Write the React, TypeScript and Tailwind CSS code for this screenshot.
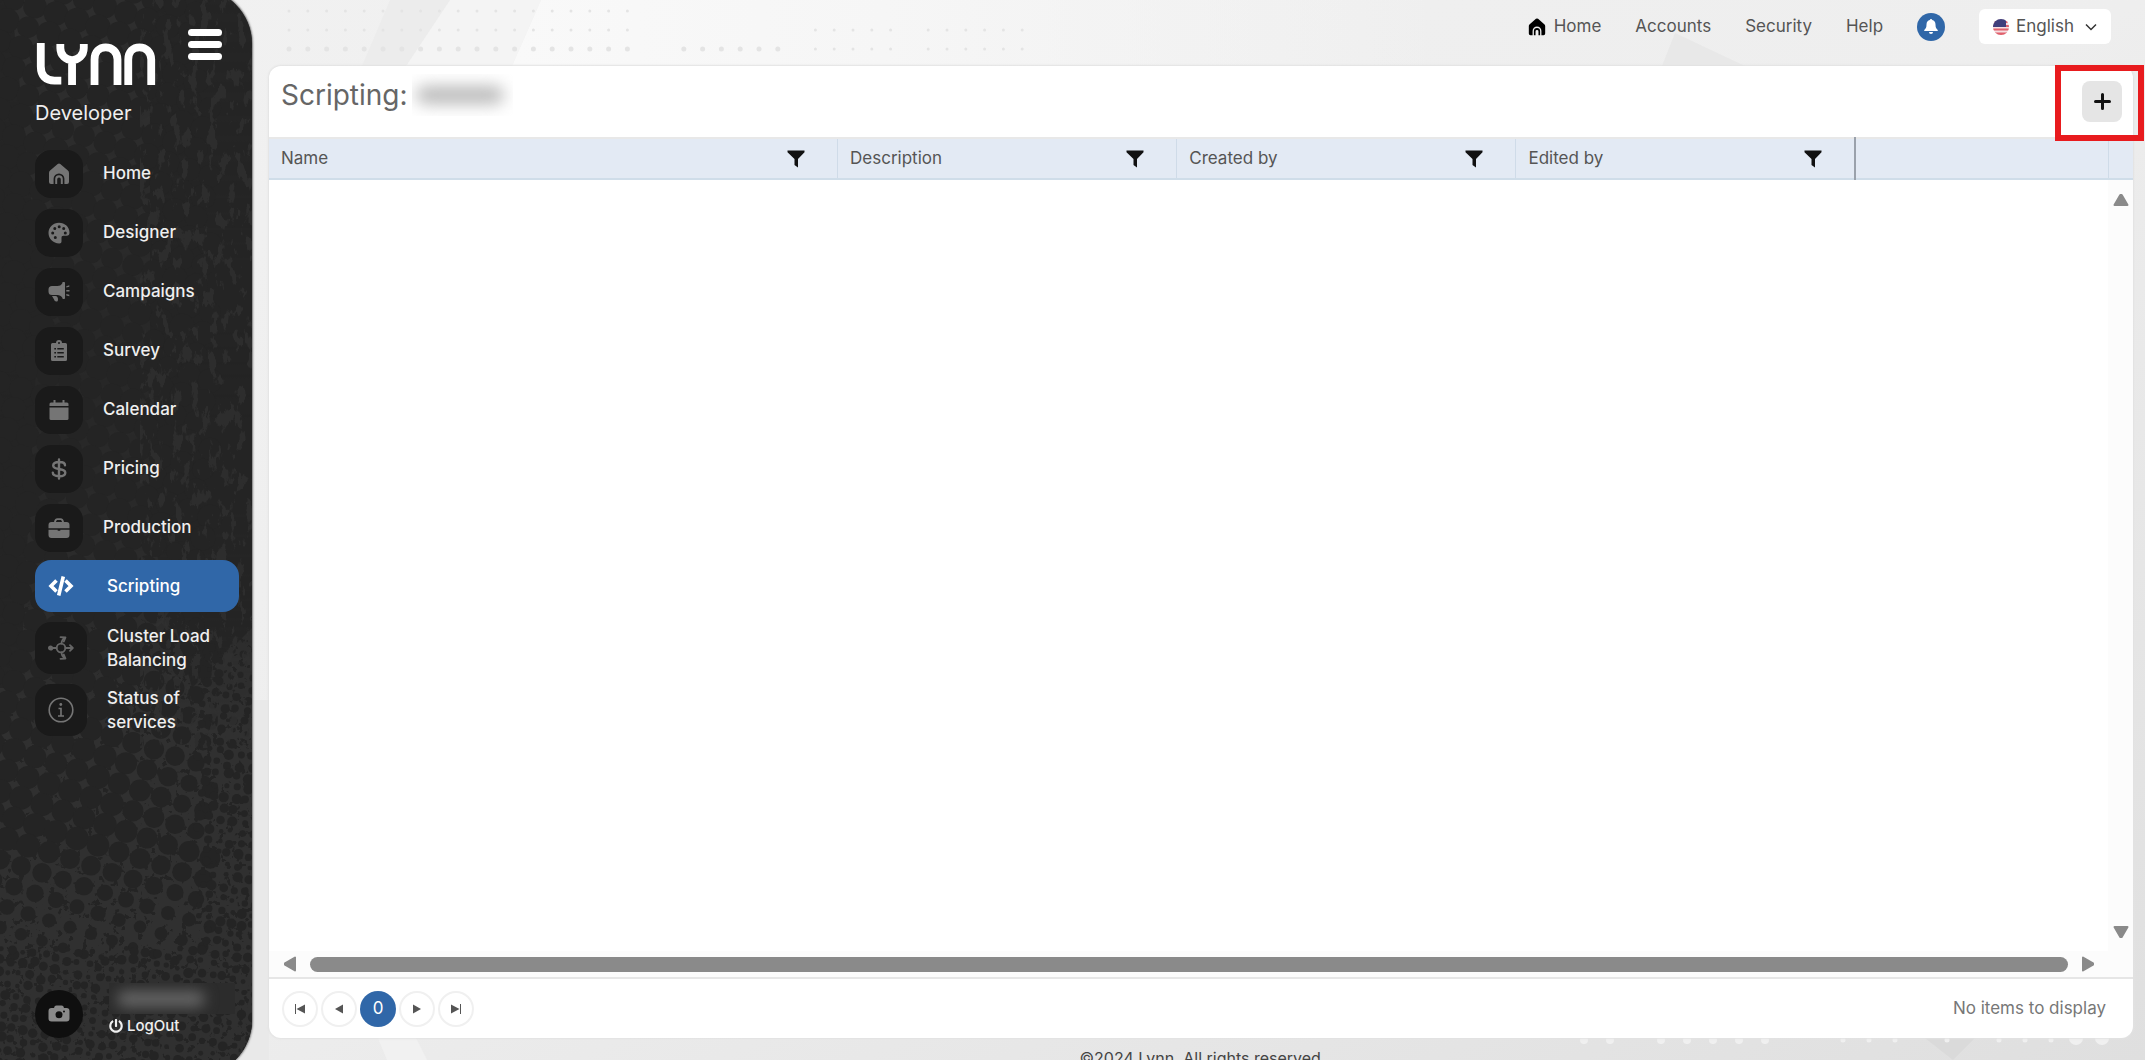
import React from "react";
import { FaPowerOff } from "react-icons/fa";

type IconProps = { className?: string };

const HomeIcon = ({ className }: IconProps) => (
  <svg viewBox="0 0 22 22" className={className} fill="currentColor" aria-hidden="true">
    <path
      fillRule="evenodd"
      d="M11 .5a2 2 0 0 1 1.3.5l7.6 6.6a3 3 0 0 1 1.1 2.3V19a2 2 0 0 1-2 2h-2.6v-5.2a5.4 5.4 0 0 0-10.8 0V21H3a2 2 0 0 1-2-2V9.900a3 3 0 0 1 1.100-2.300L9.700 1A2 2 0 0 1 11 .500Z"
    />
    <path d="M7.200 21v-5a3.800 3.800 0 0 1 7.600 0v5h-2v-4.600a1.800 1.800 0 0 0-3.600 0V21Z" />
  </svg>
);

const PaletteIcon = ({ className }: IconProps) => (
  <svg viewBox="0 0 22 22" className={className} fill="currentColor" aria-hidden="true">
    <path
      fillRule="evenodd"
      d="M11 .7C16.900.7 21.500 5 21.500 10.500c0 2.200-1 3.300-2.800 3.300h-3.200c-1.500 0-2 .9-2 2.200v3.600c0 1.300-.9 2-2.200 1.900C5 21.300.500 16.700.500 11 .500 5.200 5.200.7 11 .7ZM4.700 9.500a1.500 1.500 0 1 0 0 3 1.500 1.500 0 0 0 0-3Zm2.100-4.600a1.500 1.500 0 1 0 0 3 1.500 1.500 0 0 0 0-3Zm4.400-1.700a1.500 1.500 0 1 0 0 3 1.500 1.500 0 0 0 0-3Zm4.500 1.700a1.500 1.500 0 1 0 0 3 1.500 1.500 0 0 0 0-3Zm1.600 4.600a1.500 1.500 0 1 0 0 3 1.500 1.500 0 0 0 0-3ZM7.300 14a1.500 1.500 0 1 0 0 3 1.500 1.500 0 0 0 0-3Z"
    />
  </svg>
);

const MegaphoneIcon = ({ className }: IconProps) => (
  <svg viewBox="0 0 22 22" className={className} fill="currentColor" aria-hidden="true">
    <path d="M4 5h5.500c2 0 3.700-.8 4.700-2.500.2-.9 0-1.600 1.200-1.600h.8c.5 0 .8.3.8.8v15.600c0 .5-.3.800-.8.800h-.8c-.9 0-1-.6-1.200-1.500-1-1.600-2.700-2.600-4.700-2.600H4a3.500 3.500 0 0 1-3.500-3.500v-2A3.500 3.500 0 0 1 4 5Z" />
    <path d="M4 15h3.500c1.700 0 2.500 1.500 2.500 3.200 0 1.500-.3 2.300-1.600 2.300-1.500 0-1.800-.7-2.200-1.700Z" />
    <path d="m18.300 5.200 3-1v1.600l-3 .8Zm0 3.800h3.200v1.500h-3.200Zm0 4 3 .8v1.500l-3-.9Z" />
  </svg>
);

const ClipboardIcon = ({ className }: IconProps) => (
  <svg viewBox="0 0 22 22" className={className} fill="currentColor" aria-hidden="true">
    <path
      fillRule="evenodd"
      d="M4.500 3H8a3 3 0 0 1 6 0h3.500A1.500 1.500 0 0 1 19 4.500v15a1.500 1.500 0 0 1-1.500 1.500h-13A1.500 1.500 0 0 1 3 19.500v-15A1.500 1.500 0 0 1 4.500 3Zm1.800 5v1.500h1.700V8Zm3 0v1.500h6.500V8Zm-3 4v1.500h1.700V12Zm3 0v1.500h6.500V12Zm-3 4v1.500h1.700V16Zm3 0v1.500h6.500V16ZM11 2a1 1 0 1 0 0 2 1 1 0 0 0 0-2Z"
    />
  </svg>
);

const CalendarIcon = ({ className }: IconProps) => (
  <svg viewBox="0 0 22 22" className={className} fill="currentColor" aria-hidden="true">
    <path d="M5.500 1h2v2.500h7V1h2v2.500H19A1.500 1.500 0 0 1 20.500 5v2h-19V5A1.500 1.500 0 0 1 3 3.500h2.500Z" />
    <path d="M1.500 8.500h19v11A1.500 1.500 0 0 1 19 21H3a1.500 1.500 0 0 1-1.500-1.500Z" />
  </svg>
);

const DollarIcon = ({ className }: IconProps) => (
  <svg viewBox="0 0 22 22" className={className} fill="none" stroke="currentColor" strokeWidth="2.400" strokeLinecap="round" aria-hidden="true">
    <path d="M11 1.500v19M17 7.200C17 5 14.800 4 11.300 4 7.500 4 5.200 5.200 5.200 7.500c0 2.300 2 3 5.800 3.500s6.300 1.200 6.300 3.700c0 2.300-2.500 3.500-6.200 3.500-3.800 0-6.300-1.200-6.300-3.600" />
  </svg>
);

const BriefcaseIcon = ({ className }: IconProps) => (
  <svg viewBox="0 0 22 22" className={className} fill="currentColor" aria-hidden="true">
    <path
      fillRule="evenodd"
      d="M6 5c.4-2.400 1.400-3.800 3.500-3.800h3C14.600 1.200 15.600 2.600 16 5h2.500a3 3 0 0 1 3 3v3.300h-21V8a3 3 0 0 1 3-3Zm2 0h6c-.3-1.300-.8-1.900-1.800-1.900H9.800C8.800 3.100 8.300 3.700 8 5Z"
    />
    <path d="M.5 12.700h9.200v1.100h2.600v-1.100h9.200V18a3 3 0 0 1-3 3h-15a3 3 0 0 1-3-3Z" />
  </svg>
);

const CodeIcon = ({ className }: IconProps) => (
  <svg viewBox="0 0 26 22" className={className} fill="none" stroke="currentColor" strokeWidth="3.600" aria-hidden="true">
    <path d="M8.500 5.500 3 11l5.500 5.500M17.500 5.500 23 11l-5.500 5.500M15.300 1.500l-4.600 19" />
  </svg>
);

const ClusterIcon = ({ className }: IconProps) => (
  <svg viewBox="0 0 26 26" className={className} fill="none" stroke="currentColor" strokeWidth="1.800" strokeLinecap="round" strokeLinejoin="round" aria-hidden="true">
    <circle cx="13" cy="13" r="4.300" />
    <circle cx="2.600" cy="13" r="1.700" fill="currentColor" />
    <path d="M4 13h4.500M17.500 13h7M22 10.200l2.800 2.800-2.800 2.800M13.500 8.500c.2-3 1-4.600 3.500-5.700M13.500 17.500c.2 3 1 4.600 3.500 5.700M12.500 2.200l5 .3-1.700 4M12.500 23.800l5-.3-1.700-4" />
  </svg>
);

const InfoIcon = ({ className }: IconProps) => (
  <svg viewBox="0 0 26 26" className={className} fill="none" stroke="currentColor" strokeWidth="1.600" aria-hidden="true">
    <circle cx="13" cy="13" r="11.800" />
    <path d="M10.500 11.500H13V19M10 19h6" />
    <circle cx="12.800" cy="7.500" r="1.400" fill="currentColor" stroke="none" />
  </svg>
);

const CameraIcon = ({ className }: IconProps) => (
  <svg viewBox="0 0 22 18" className={className} fill="currentColor" aria-hidden="true">
    <path
      fillRule="evenodd"
      d="M6 3c.5-1.700 1-2.500 2.500-2.500h5C15 .500 15.500 1.300 16 3h2.500a3 3 0 0 1 3 3v7.500a3 3 0 0 1-3 3h-15a3 3 0 0 1-3-3V6a3 3 0 0 1 3-3Zm5 3.300a3.500 3.500 0 1 0 0 7 3.500 3.500 0 0 0 0-7Zm5-.8a1 1 0 1 0 0 2 1 1 0 0 0 0-2Z"
    />
  </svg>
);

const BellIcon = ({ className }: IconProps) => (
  <svg viewBox="0 0 14 15" className={className} fill="currentColor" aria-hidden="true">
    <path d="M7 0a1.200 1.200 0 0 1 1.200 1.100C10.200 1.600 11.500 3.200 11.500 5.500c0 3 .7 4 2 5.200.6.600.3 1.400-.5 1.400H1c-.8 0-1.100-.8-.5-1.400 1.300-1.200 2-2.200 2-5.200 0-2.300 1.300-3.900 3.300-4.400A1.200 1.200 0 0 1 7 0ZM5 13h4a2 2 0 0 1-4 0Z" />
  </svg>
);

const FilterIcon = ({ className }: IconProps) => (
  <svg viewBox="0 0 18 18" className={className} fill="currentColor" aria-hidden="true">
    <path d="M.5.500h17v1.800L11 9v8.500L7.500 15V9L.5 2.300Z" />
  </svg>
);

const FlagIcon = ({ className }: IconProps) => (
  <svg viewBox="0 0 16 16" className={className} aria-hidden="true">
    <clipPath id="flag-round">
      <circle cx="8" cy="8" r="8" />
    </clipPath>
    <g clipPath="url(#flag-round)">
      <path fill="#f6dfe2" d="M0 0h16v16H0z" />
      <path fill="#e0606c" d="M0 2h16v2H0zM0 6h16v2H0zM0 9.500h16v2H0zM0 13.500h16v2.500H0z" />
      <path fill="#3f3f7c" d="M0 0h13v8H0z" />
    </g>
  </svg>
);

const Arrow = ({ className }: IconProps) => (
  <svg viewBox="0 0 16 14" className={className} fill="#8a8a8a" stroke="#8a8a8a" strokeWidth="2" strokeLinejoin="round" aria-hidden="true">
    <path d="M7.300 2h1.400L14.500 12h-13Z" />
  </svg>
);

const LynnLogo = ({ className }: IconProps) => (
  <svg viewBox="0 0 122 44" className={className} aria-label="Lynn" role="img">
    <g fill="none" stroke="#fff" strokeWidth="8">
      <path d="M4.500 0v24c0 9.500 5 14.500 14 14.500h7" />
      <path d="M24.500 1v4c0 8 6 12.500 12 12.500s12-4.500 12-12.500V1M36.500 17v26" />
      <path d="M59.500 43V17C59.500 9 64.500 4.500 71 4.500S83 9 83 17v26" />
      <path d="M94 43V17c0-8 5-12.500 11.500-12.500S117.500 9 117.500 17v26" />
    </g>
  </svg>
);

type Dot = { x: number; y: number; r: number };

function noise(a: number, b: number) {
  const v = Math.sin(a * 127.1 + b * 311.7) * 43758.5453;
  return v - Math.floor(v);
}

function buildHalftone(): Dot[] {
  const dots: Dot[] = [];
  for (let i = -10; i < 40; i++) {
    for (let j = -20; j < 60; j++) {
      const x = i * 21 - j * 7 + 14;
      const y = i * 6.7 + j * 20.5 + 12;
      if (x < -12 || x > 212 || y < -12 || y > 1090) continue;
      let r = 12;
      if (y < 560) r = 10.5 + noise(i, j) * 2;
      else if (y < 860) r = 11.2 - Math.max(0, x - 110) / 30;
      else r = 10.5 - ((y - 860) / 100) * 5.5;
      if (r < 4) continue;
      dots.push({ x, y, r: r + noise(j, i) * 0.8 });
    }
  }
  for (let i = 0; i < 40; i++) {
    for (let j = 0; j < 60; j++) {
      const x = i * 11 - j * 1.5 + noise(i, j) * 4;
      const y = 620 + i * 2 + j * 11 + noise(j, i) * 4;
      if (x < -4 || x > 256 || y > 1090) continue;
      if (x < 196 && y < 960) continue;
      dots.push({ x, y, r: 2.2 + noise(i + 7, j) * 3 });
    }
  }
  return dots;
}

const halftone = buildHalftone();

const SidebarTexture = () => (
  <svg className="absolute inset-0 size-full" viewBox="0 0 252 1088" preserveAspectRatio="none" aria-hidden="true">
    <defs>
      <linearGradient id="tone" x1="0" y1="0" x2="0" y2="1">
        <stop offset="0" stopColor="#fff" stopOpacity=".9" />
        <stop offset=".2" stopColor="#fff" stopOpacity=".6" />
        <stop offset=".35" stopColor="#fff" stopOpacity=".3" />
        <stop offset=".55" stopColor="#fff" stopOpacity=".6" />
        <stop offset=".68" stopColor="#fff" stopOpacity="1" />
        <stop offset="1" stopColor="#fff" stopOpacity="1" />
      </linearGradient>
      <mask id="tone-mask">
        <rect width="252" height="1088" fill="url(#tone)" />
      </mask>
      <filter id="grunge" x="0" y="0" width="100%" height="100%" colorInterpolationFilters="sRGB">
        <feTurbulence type="fractalNoise" baseFrequency=".11 .05" numOctaves="5" seed="8" />
        <feColorMatrix values="0 0 0 0 .19  0 0 0 0 .19  0 0 0 0 .19  14 0 0 0 -8" />
      </filter>
      <filter id="speckle" x="0" y="0" width="100%" height="100%" colorInterpolationFilters="sRGB">
        <feTurbulence type="fractalNoise" baseFrequency=".16" numOctaves="3" seed="3" />
        <feColorMatrix values="0 0 0 0 .141  0 0 0 0 .141  0 0 0 0 .141  16 0 0 0 -9.800" />
      </filter>
    </defs>
    <g mask="url(#tone-mask)">
      <rect width="252" height="1088" fill="#303030" />
      <path d="M150 0h102v640l-60 60-42-160Z" fill="#252525" />
      <path d="M0 0h10l30 300-20 400H0Z" fill="#252525" />
    </g>
    {halftone.map((d, i) => (
      <circle key={i} cx={d.x} cy={d.y} r={d.r} fill="#242424" />
    ))}
    <rect x="140" width="112" height="760" filter="url(#grunge)" opacity=".8" />
    <rect y="600" width="252" height="488" filter="url(#speckle)" />
  </svg>
);

const backdropDots: Dot[] = [];
for (const y of [11, 30, 49]) {
  for (let k = 0; k < 40; k++) {
    const x = 289 + k * 18.8;
    const first = k < 19;
    const second = k >= 21 && k <= 26 && y === 49;
    const third = k >= 28 && k !== 33 && y > 11;
    if (first || second || third) {
      backdropDots.push({ x, y, r: y === 49 && k < 27 ? 2.5 : 1.5 });
    }
  }
}

const Backdrop = () => (
  <svg className="absolute inset-0 size-full" viewBox="0 0 2145 1060" preserveAspectRatio="none" aria-hidden="true">
    <defs>
      <linearGradient id="page" x1="0" y1="0" x2="1" y2="1">
        <stop offset="0" stopColor="#f1f1f1" />
        <stop offset=".5" stopColor="#eeeeee" />
        <stop offset="1" stopColor="#dfdfdf" />
      </linearGradient>
      <linearGradient id="glow" x1="0" y1="0" x2="1" y2="0">
        <stop offset="0" stopColor="#f9f9f9" />
        <stop offset=".4" stopColor="#f6f6f6" />
        <stop offset="1" stopColor="#f6f6f6" stopOpacity="0" />
      </linearGradient>
    </defs>
    <rect width="2145" height="1060" fill="url(#page)" />
    <path d="M541 0h900v66H512Z" fill="url(#glow)" />
    <path d="M450 0h91l-29 66H406Z" fill="#f4f4f4" />
    <path d="M390 0h60l-44 66h-44Z" fill="#ececec" />
    <path d="M1675 33 1745 66h-83Z" fill="#e8e8e8" />
    <path d="M0 700h269v360H0Z" fill="#e9e9e9" />
    <path d="M377 1036h38l12 24h-40Z" fill="#f1f1f1" />
    <path d="M1925 1038h50l-22 22Z" fill="#dadada" />
    {backdropDots.map((d, i) => (
      <circle key={i} cx={d.x} cy={d.y} r={d.r} fill="#e4e4e4" />
    ))}
    {[1584, 1610, 1661, 1687, 1713, 1739, 1765].map((x) => (
      <circle key={x} cx={x} cy={1040} r={4} fill="#f0f0f0" />
    ))}
    {[1843, 1869, 1895, 1947, 1999, 2025, 2051].map((x) => (
      <circle key={x} cx={x} cy={1040} r={2.5} fill="#f0f0f0" />
    ))}
    <circle cx="2076" cy="1038" r="7" fill="#f0f0f0" />
    <circle cx="2102" cy="1038" r="7" fill="#f0f0f0" />
  </svg>
);

const menu = [
  { label: "Home", Icon: HomeIcon },
  { label: "Designer", Icon: PaletteIcon },
  { label: "Campaigns", Icon: MegaphoneIcon },
  { label: "Survey", Icon: ClipboardIcon },
  { label: "Calendar", Icon: CalendarIcon },
  { label: "Pricing", Icon: DollarIcon },
  { label: "Production", Icon: BriefcaseIcon },
];

function Sidebar() {
  return (
    <aside className="relative -mt-3 -mb-4 flex w-[252px] shrink-0 flex-col overflow-hidden rounded-r-[56px] bg-[#242424] pt-3 pb-4 pl-[35px] text-[#efefef] shadow-[0_0_2px_1px_#777]">
      <SidebarTexture />
      <div className="relative flex items-start justify-between pr-[30px]">
        <LynnLogo className="mt-[43px] h-[43px] w-[122px]" />
        <button type="button" aria-label="Toggle menu" className="mt-[29px] flex w-[34px] flex-col gap-[5px]">
          <span className="h-[7px] rounded-full bg-white" />
          <span className="h-[7px] rounded-full bg-white" />
          <span className="h-[7px] rounded-full bg-white" />
        </button>
      </div>
      <p className="relative mt-[11px] text-[20px] leading-8">Developer</p>
      <nav className="relative mt-[21px] flex flex-col pr-[13px] text-[17px] font-medium">
        <ul className="flex flex-col gap-[11px]">
          {menu.map(({ label, Icon }) => (
            <li key={label}>
              <a href="#" className="flex items-center gap-5">
                <span className="flex size-12 items-center justify-center rounded-[16px] bg-[#1a1a1a] text-[#757575]">
                  <Icon className="size-[22px]" />
                </span>
                <span>{label}</span>
              </a>
            </li>
          ))}
        </ul>
        <ul className="mt-2 flex flex-col gap-[10px] leading-6">
          <li>
            <a href="#" aria-current="page" className="flex h-[52px] items-center gap-5 rounded-[16px] bg-[#3067a8] text-white">
              <span className="flex w-[52px] justify-center">
                <CodeIcon className="h-[22px] w-[26px]" />
              </span>
              Scripting
            </a>
          </li>
          <li>
            <a href="#" className="flex h-[52px] items-center gap-5">
              <span className="flex size-[52px] shrink-0 items-center justify-center rounded-[16px] bg-[#1a1a1a] text-[#666]">
                <ClusterIcon className="size-[26px]" />
              </span>
              Cluster Load Balancing
            </a>
          </li>
          <li>
            <a href="#" className="flex h-[52px] items-center gap-5">
              <span className="flex size-[52px] shrink-0 items-center justify-center rounded-[16px] bg-[#1a1a1a] text-[#757575]">
                <InfoIcon className="size-[26px]" />
              </span>
              <span className="w-20">Status of services</span>
            </a>
          </li>
        </ul>
      </nav>
      <div className="relative mt-auto mb-[22px] flex items-end gap-[26px]">
        <button type="button" aria-label="Change photo" className="flex size-12 items-center justify-center rounded-full bg-[#0f0f0f] text-[#8a8a8a]">
          <CameraIcon className="h-[18px] w-[22px]" />
        </button>
        <div>
          <div className="flex h-[31px] w-[126px] items-center overflow-hidden bg-[#2c2c2c] pl-2" aria-hidden="true">
            <span className="h-4 w-[88px] rounded-full bg-[#666] blur-[7px]" />
          </div>
          <button type="button" className="flex items-center gap-1 text-[15px] leading-6 font-medium">
            <FaPowerOff className="size-3.5" />
            LogOut
          </button>
        </div>
      </div>
    </aside>
  );
}

function TopBar() {
  return (
    <header className="flex h-[66px] items-start justify-end pt-[9px] pr-[34px]">
      <nav className="flex h-[35px] items-center gap-[34px] text-[17px] text-[#555]">
        <a href="#" className="flex items-center gap-2">
          <HomeIcon className="size-[18px] text-black" />
          Home
        </a>
        <a href="#">Accounts</a>
        <a href="#">Security</a>
        <a href="#">Help</a>
        <button type="button" aria-label="Notifications" className="flex size-7 items-center justify-center rounded-full bg-[#3067a8] text-white">
          <BellIcon className="h-[15px] w-[14px]" />
        </button>
        <button type="button" className="flex h-[35px] items-center gap-[7px] rounded-md bg-white px-[14px]">
          <FlagIcon className="size-4" />
          English
          <svg viewBox="0 0 12 8" className="ml-1 h-2 w-3" fill="none" stroke="#333" strokeWidth="1.500" aria-hidden="true">
            <path d="m1 1.500 5 5 5-5" />
          </svg>
        </button>
      </nav>
    </header>
  );
}

const columns = [
  { label: "Name", className: "w-[30.5%] border-r border-[#cfdbe8]" },
  { label: "Description", className: "w-[18.2%] border-r border-[#cfdbe8]" },
  { label: "Created by", className: "w-[18.2%] border-r border-[#cfdbe8]" },
  { label: "Edited by", className: "w-[18.2%] border-r-2 border-[#9aa1ab]" },
];

function Pager() {
  const round = "flex size-9 items-center justify-center rounded-full border-2 border-[#f0f0f0] text-[#555]";
  return (
    <div className="flex h-[61px] items-center justify-between border-t-2 border-[#e6e6e6] pr-[27px] pl-[13px]">
      <div className="flex gap-[3px]">
        <button type="button" aria-label="First page" className={round}>
          <svg viewBox="0 0 10 10" className="size-2.5" fill="currentColor"><path d="M0 0h1v10H0zM10 0.500v9L1.500 5z" /></svg>
        </button>
        <button type="button" aria-label="Previous page" className={round}>
          <svg viewBox="0 0 10 10" className="size-2.5" fill="currentColor"><path d="M9 .5v9L1 5z" /></svg>
        </button>
        <button type="button" aria-current="page" className="flex size-9 items-center justify-center rounded-full bg-[#3067a8] text-[17px] text-white">
          0
        </button>
        <button type="button" aria-label="Next page" className={round}>
          <svg viewBox="0 0 10 10" className="size-2.5" fill="currentColor"><path d="M1 .5v9L9 5z" /></svg>
        </button>
        <button type="button" aria-label="Last page" className={round}>
          <svg viewBox="0 0 10 10" className="size-2.5" fill="currentColor"><path d="M9 0h1v10H9zM0 .5v9L8.500 5z" /></svg>
        </button>
      </div>
      <p className="text-[17px] text-[#777]">No items to display</p>
    </div>
  );
}

function ScriptingPanel() {
  return (
    <main className="relative mr-3 ml-[17px] flex min-h-0 flex-1 flex-col rounded-[12px] bg-white shadow-[0_0_2px_1px_#e2e2e2]">
      <div className="flex h-[71px] items-start justify-between pr-[11px] pl-3">
        <h1 className="flex items-center pt-2 text-[28px] leading-9 text-[#666]">
          Scripting:
          <span className="ml-1 flex h-[42px] w-[101px] items-center overflow-hidden pl-1" aria-hidden="true">
            <span className="h-[18px] w-[88px] rounded-full bg-[#b9b9b9] blur-[8px]" />
          </span>
        </h1>
        <div className="relative pt-[15px]">
          <button type="button" aria-label="Add script" className="flex h-[41px] w-10 items-center justify-center rounded-lg bg-[#e5e5e5]">
            <svg viewBox="0 0 17 17" className="size-[17px]" stroke="#111" strokeWidth="3" strokeLinecap="round" aria-hidden="true">
              <path d="M8.500 1.500v14M1.500 8.500h14" />
            </svg>
          </button>
          <div className="pointer-events-none absolute -top-px -right-[22px] h-[76px] w-[89px] border-[6px] border-[#e81b1e]" />
        </div>
      </div>
      <table className="h-[43px] w-full table-fixed border-collapse border-t-2 border-b-2 border-t-[#e8e8e8] border-b-[#cfdde9] bg-[#e3eaf4] text-[17px] text-[#555]">
        <thead>
          <tr>
            {columns.map((column) => (
              <th key={column.label} scope="col" className={`${column.className} p-0 text-left font-normal`}>
                <div className="flex items-center justify-between pr-8 pl-3">
                  {column.label}
                  <button type="button" aria-label={`Filter ${column.label}`}>
                    <FilterIcon className="size-[18px] text-[#111]" />
                  </button>
                </div>
              </th>
            ))}
            <td className="border-r border-[#cfdbe8]" />
            <td className="w-[25px]" />
          </tr>
        </thead>
      </table>
      <div className="flex min-h-0 flex-1">
        <div className="flex-1" />
        <div className="flex w-[25px] flex-col items-center justify-between bg-[#fcfcfc] pt-[13px] pb-3">
          <Arrow className="h-3.5 w-4" />
          <Arrow className="h-3.5 w-4 rotate-180" />
        </div>
      </div>
      <div className="flex h-[26px] items-center gap-3 bg-[#fcfcfc] pr-[37px] pl-[13px]">
        <Arrow className="h-3.5 w-4 -rotate-90" />
        <div className="h-[15px] flex-1 rounded-full bg-[#8a8a8a]" />
        <Arrow className="h-3.5 w-4 rotate-90" />
      </div>
      <Pager />
    </main>
  );
}

export default function App() {
  return (
    <div className="relative h-screen overflow-hidden bg-[#f0f0f0] font-['Inter',sans-serif]">
      <Backdrop />
      <div className="relative flex h-full">
        <Sidebar />
        <div className="flex min-w-0 flex-1 flex-col">
          <TopBar />
          <ScriptingPanel />
          <footer className="h-[22px] shrink-0 pt-2 pl-2 text-center text-[16px] leading-6 text-[#444]">©2024 Lynn. All rights reserved.</footer>
        </div>
      </div>
    </div>
  );
}
